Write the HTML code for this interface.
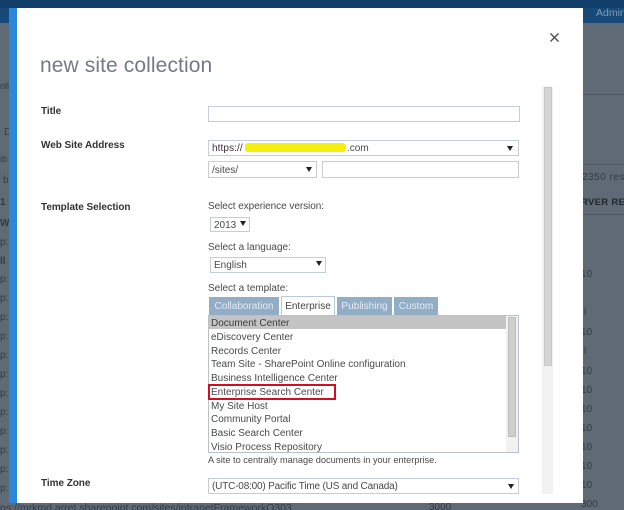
<!DOCTYPE html>
<html><head><meta charset="utf-8">
<style>
html,body{margin:0;padding:0}
body{width:624px;height:510px;overflow:hidden;position:relative;background:#5f6a76;font-family:"Liberation Sans",sans-serif}
#root{position:absolute;left:0;top:0;width:624px;height:510px;overflow:hidden;filter:blur(.35px)}
#root div{position:absolute;box-sizing:border-box}
.t{white-space:nowrap;font-size:10px;line-height:14px;color:#4a4a4a}
.b{font-weight:bold;color:#333;font-size:10px;letter-spacing:-.05px}
.box{background:#fff;border:1px solid #c3ced6}
.arr{width:0;height:0;border-left:3px solid transparent;border-right:3px solid transparent;border-top:5px solid #222}
.tab{height:18px;background:#92adc6;color:#e4edf4;font-size:10px;line-height:20px;text-align:center;white-space:nowrap}
.bg{white-space:nowrap;font-size:10px;line-height:12px;color:#333c46}
</style></head><body><div id="root">
<div style="left:0;top:0;width:624px;height:8px;background:#123f69"></div>
<div style="left:0;top:8px;width:9px;height:15px;background:#174a78"></div>
<div style="left:583px;top:8px;width:41px;height:15px;background:#174a78"></div>
<div class="bg" style="left:596px;top:7px;color:#7f9cb8;font-size:10.5px">Admin</div>
<div style="left:583px;top:94px;width:41px;height:1px;background:#4e5863"></div>
<div style="left:583px;top:164px;width:41px;height:1px;background:#4e5863"></div>
<div style="left:583px;top:214px;width:41px;height:1px;background:#4e5863"></div>
<div class="bg" style="left:582px;top:172px;color:#343c44;letter-spacing:.5px">2350 res</div>
<div class="bg" style="left:581px;top:197px;font-weight:bold;color:#20272e;font-size:9.5px;letter-spacing:.3px">RVER RES</div>
<div class="bg" style="left:581px;top:269px">10</div>
<div class="bg" style="left:584px;top:307px">l</div>
<div class="bg" style="left:581px;top:327px">10</div>
<div class="bg" style="left:584px;top:346px">l</div>
<div class="bg" style="left:581px;top:366px">10</div>
<div class="bg" style="left:581px;top:385px">10</div>
<div class="bg" style="left:581px;top:404px">10</div>
<div class="bg" style="left:581px;top:423px">10</div>
<div class="bg" style="left:581px;top:442px">10</div>
<div class="bg" style="left:581px;top:461px">10</div>
<div class="bg" style="left:581px;top:480px">10</div>
<div class="bg" style="left:581px;top:499px">300</div>
<div class="bg" style="left:0;top:80px;font-size:9px">oll</div>
<div class="bg" style="left:4px;top:127px">D</div>
<div class="bg" style="left:0;top:153px;font-size:9px">ib</div>
<div class="bg" style="left:3px;top:175px">b</div>
<div class="bg" style="left:0;top:197px;font-weight:bold">1</div>
<div class="bg" style="left:0;top:218px;font-weight:bold">W</div>
<div class="bg" style="left:0;top:237px">p:</div>
<div class="bg" style="left:0;top:256px;font-weight:bold">ll</div>
<div class="bg" style="left:0;top:274px">p:</div>
<div class="bg" style="left:0;top:293px">p:</div>
<div class="bg" style="left:0;top:312px">p:</div>
<div class="bg" style="left:0;top:331px">p:</div>
<div class="bg" style="left:0;top:350px">p:</div>
<div class="bg" style="left:0;top:369px">p:</div>
<div class="bg" style="left:0;top:388px">p:</div>
<div class="bg" style="left:0;top:407px">p:</div>
<div class="bg" style="left:0;top:426px">p:</div>
<div class="bg" style="left:0;top:445px">p:</div>
<div class="bg" style="left:0;top:464px">p:</div>
<div class="bg" style="left:0;top:483px">p:</div>
<div class="bg" style="left:0;top:502px;font-size:10.5px">ps://mrkmd arret.sharepoint.com/sites/intranetFrameworkO303</div>
<div class="bg" style="left:429px;top:502px">3000</div>

<div style="left:9px;top:8px;width:574px;height:495px;background:#fff"></div>
<div style="left:9px;top:8px;width:7.5px;height:495px;background:#2b88d8"></div>

<div class="t" style="left:40px;top:52px;font-size:21px;line-height:27px;color:#737b82;letter-spacing:.1px">new site collection</div>
<svg style="position:absolute;left:549px;top:32px" width="11" height="11" viewBox="0 0 11 11"><path d="M1.5 1.5L9.5 9.5M9.5 1.5L1.5 9.5" stroke="#4a4f55" stroke-width="1.4" fill="none"/></svg>

<div class="t b" style="left:41px;top:105px">Title</div>
<div class="t b" style="left:41px;top:139px">Web Site Address</div>
<div class="t b" style="left:41px;top:201px">Template Selection</div>
<div class="t b" style="left:41px;top:477px">Time Zone</div>

<div class="box" style="left:208px;top:106px;width:312px;height:16px"></div>

<div class="box" style="left:208px;top:140px;width:311px;height:16px"></div>
<div class="t" style="left:212px;top:142px;color:#40303a;letter-spacing:.1px">https://</div>
<div style="left:245px;top:143px;width:101px;height:9px;background:#f6ee0c;border-radius:3px"></div>
<div class="t" style="left:347px;top:142px">.com</div>
<div class="arr" style="left:507px;top:146px"></div>

<div class="box" style="left:208px;top:161px;width:109px;height:17px"></div>
<div class="t" style="left:212px;top:164px">/sites/</div>
<div class="arr" style="left:306px;top:167px"></div>
<div class="box" style="left:322px;top:161px;width:197px;height:17px"></div>

<div class="t" style="left:208px;top:200px;letter-spacing:-.05px">Select experience version:</div>
<div class="box" style="left:210px;top:217px;width:40px;height:15px"></div>
<div class="t" style="left:214px;top:219px">2013</div>
<div class="arr" style="left:240px;top:221px"></div>

<div class="t" style="left:208px;top:241px">Select a language:</div>
<div class="box" style="left:210px;top:257px;width:116px;height:16px"></div>
<div class="t" style="left:214px;top:259px">English</div>
<div class="arr" style="left:316px;top:261px"></div>

<div class="t" style="left:208px;top:282px">Select a template:</div>
<div class="tab" style="left:209px;top:297px;width:70px">Collaboration</div>
<div class="tab" style="left:281px;top:296px;width:54px;height:20px;background:#fff;color:#444;border:1px solid #b9cbd9;border-bottom:0">Enterprise</div>
<div class="tab" style="left:337px;top:297px;width:55px">Publishing</div>
<div class="tab" style="left:394px;top:297px;width:44px">Custom</div>

<div class="box" style="left:208px;top:315px;width:311px;height:138px;border-color:#b7c3cc"></div>
<div style="left:209px;top:316px;width:297px;height:13px;background:#c4c4c4"></div>
<div style="left:506px;top:316px;width:12px;height:136px;background:#f1f1f1"></div>
<div style="left:508px;top:317px;width:8px;height:120px;background:#cfcfcf;border:1px solid #bdbdbd;border-radius:1px"></div>
<div class="t" style="left:211px;top:317px;color:#3c3c3c">Document Center</div>
<div class="t" style="left:211px;top:331px">eDiscovery Center</div>
<div class="t" style="left:211px;top:345px">Records Center</div>
<div class="t" style="left:211px;top:358px">Team Site - SharePoint Online configuration</div>
<div class="t" style="left:211px;top:372px">Business Intelligence Center</div>
<div class="t" style="left:211px;top:386px">Enterprise Search Center</div>
<div class="t" style="left:211px;top:400px">My Site Host</div>
<div class="t" style="left:211px;top:413px">Community Portal</div>
<div class="t" style="left:211px;top:427px">Basic Search Center</div>
<div class="t" style="left:211px;top:441px">Visio Process Repository</div>
<div style="left:208px;top:384px;width:128px;height:16px;border:2px solid #d01020"></div>
<div class="t" style="left:208px;top:453px;font-size:9.2px">A site to centrally manage documents in your enterprise.</div>

<div class="box" style="left:208px;top:478px;width:311px;height:16px"></div>
<div class="t" style="left:212px;top:480px;letter-spacing:-.18px">(UTC-08:00) Pacific Time (US and Canada)</div>
<div class="arr" style="left:508px;top:484px"></div>

<div style="left:542px;top:86px;width:11px;height:408px;background:#f2f2f2"></div>
<div style="left:544px;top:87px;width:8px;height:279px;background:#d4d4d4;border:1px solid #c8c8c8"></div>
</div></body></html>
